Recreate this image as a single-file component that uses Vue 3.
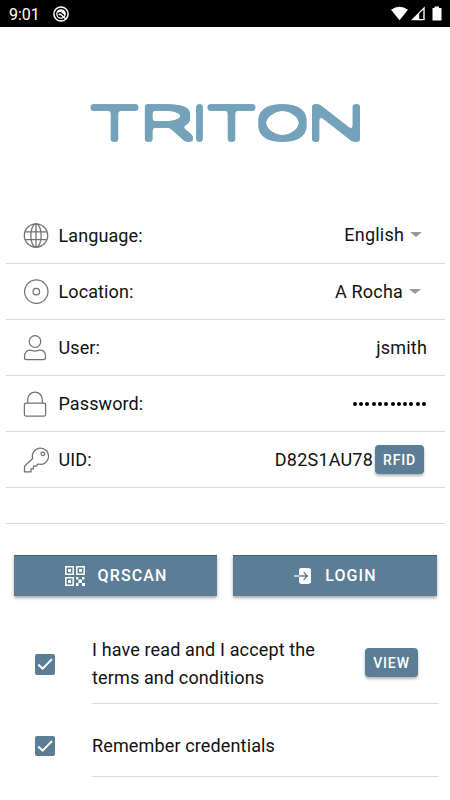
<script setup>
const rows = [
  { key: 'language', label: 'Language:', value: 'English', select: true },
  { key: 'location', label: 'Location:', value: 'A Rocha', select: true },
  { key: 'user', label: 'User:', value: 'jsmith' },
  { key: 'password', label: 'Password:', dots: 12 },
  { key: 'uid', label: 'UID:', value: 'D82S1AU78', button: 'RFID' },
]
const letters = [
  { c: 'T', x: -2, w: 53 },
  { c: 'R', x: 47, w: 58 },
  { c: 'I', x: 104, w: 11 },
  { c: 'T', x: 115, w: 53 },
  { c: 'O', x: 166, w: 53 },
  { c: 'N', x: 216, w: 60 },
]
</script>

<template>
  <div class="screen">
    <header class="status">
      <span class="time">9:01</span>
      <svg class="app-icon" width="16" height="16" viewBox="0 0 16 16">
        <circle cx="8" cy="8" r="7.1" fill="none" stroke="#fff" stroke-width="1.5" />
        <circle cx="8" cy="8" r="4.2" fill="none" stroke="#fff" stroke-width="1.3" />
        <path d="M5 5A4.3 4.3 0 0 1 12 9.5L8.8 6.8A2.2 2.2 0 0 0 5.3 7Z" fill="#fff" />
        <path d="M5.6 8.6L7.5 8.2L12.6 12.8" fill="none" stroke="#fff" stroke-width="1.5" />
      </svg>
      <div class="signals">
        <svg width="52" height="16" viewBox="0 0 52 16">
          <path d="M0 3.8Q8.5-2.4 17 3.8L8.5 14.2Z" fill="#fff" />
          <path d="M20 14.2L33.7 .5V14.2Z" fill="#fff" />
          <path d="M28.2 7.5V13H32.3V3.8Z" fill="#000" />
          <path d="M41.5 2H43.5V.5H48V2H50.5V14.5H41.5Z" fill="#fff" />
        </svg>
      </div>
    </header>

    <div class="brand">
      <svg width="272" height="42" viewBox="0 0 272 42" overflow="visible">
        <filter id="rounded" x="-10" y="-10" width="300" height="64" filterUnits="userSpaceOnUse" color-interpolation-filters="sRGB">
          <feMorphology operator="dilate" radius="3" />
          <feGaussianBlur stdDeviation="1.8" />
          <feComponentTransfer result="shape"><feFuncA type="linear" slope="5" intercept="-2.2" /></feComponentTransfer>
          <feFlood flood-color="#74a2bb" />
          <feComposite in2="shape" operator="in" />
        </filter>
        <text y="37" class="wordmark" filter="url(#rounded)"><tspan
          v-for="(l, i) in letters" :key="i" :x="l.x" :textLength="l.w" lengthAdjust="spacingAndGlyphs">{{ l.c }}</tspan></text>
      </svg>
    </div>

    <section class="fields">
      <div v-for="r in rows" :key="r.key" class="row">
        <svg class="row-icon" width="26" height="26" viewBox="0 0 26 26">
          <g v-if="r.key === 'language'">
            <circle cx="13" cy="12.5" r="11.7" />
            <ellipse cx="13" cy="12.5" rx="5.2" ry="11.7" />
            <path d="M13 .8V24.2M2.2 8.8H23.8M2.2 16.5H23.8" />
          </g>
          <g v-else-if="r.key === 'location'">
            <circle cx="13.3" cy="12.6" r="11.7" />
            <circle cx="13.3" cy="12.6" r="3.3" />
          </g>
          <g v-else-if="r.key === 'user'">
            <circle cx="12" cy="6.5" r="5.8" />
            <path d="M7 15.2C9 15.2 9.7 16 12 16S15 15.2 17 15.2C20.8 15.2 22.5 18 22.5 21.5V22.8Q22.5 24.7 20.5 24.7H3.5Q1.5 24.7 1.5 22.8V21.5C1.5 18 3.2 15.2 7 15.2Z" />
          </g>
          <g v-else-if="r.key === 'password'">
            <rect x="1.4" y="12" width="21.2" height="13" rx="1.5" />
            <path d="M4.7 12V8.4A7.3 7.3 0 0 1 19.3 8.4V12" />
          </g>
          <g v-else>
            <path d="M9.7 11.5A8.1 8.1 0 1 1 15.2 17L13 19.2H10.5V21.8H8V24.9H1.5V19.2Z" />
            <circle cx="19.8" cy="6.8" r="1.8" />
          </g>
        </svg>
        <span class="label">{{ r.label }}</span>
        <span v-if="r.dots" class="dots"><i v-for="n in r.dots" :key="n" /></span>
        <span v-else class="value" :class="[r.key, { picker: r.select }]">{{ r.value }}</span>
        <span v-if="r.select" class="caret" :class="r.key" />
        <button v-if="r.button" class="chip rfid">{{ r.button }}</button>
      </div>
      <div class="row spacer" />
    </section>

    <section class="actions">
      <button class="action">
        <svg class="qr" width="20" height="20" viewBox="0 0 20 20" fill="none" stroke="#fff">
          <path stroke-width="1.5" d="M.8.8H8.2V8.2H.8ZM11.8.8H19.2V8.2H11.8ZM.8 11.8H8.2V19.2H.8Z" />
          <path fill="#fff" stroke="none" d="M3 3H6V6H3ZM14 3H17V6H14ZM3 14H6V17H3ZM11 11H13.5V13.5H11ZM17 11H19.5V13.5H17ZM13.5 13.5H17V17H13.5ZM11 17H13.5V20H11ZM17 17H20V20H17Z" />
        </svg>
        <span>QRSCAN</span>
      </button>
      <button class="action">
        <svg class="enter" width="18" height="16" viewBox="0 0 18 16">
          <rect x="5" y="0" width="12" height="16" rx="2.4" fill="#fff" />
          <path d="M0 8H5" stroke="#fff" stroke-width="1.3" />
          <path d="M5 8H13.2M9.7 4.3L13.4 8L9.7 11.7" fill="none" stroke="#5b7d95" stroke-width="1.3" />
        </svg>
        <span>LOGIN</span>
      </button>
    </section>

    <section class="checks">
      <div class="check terms">
        <span class="box"><svg width="20" height="20" viewBox="0 0 20 20"><path d="M3.3 10.5L7.6 14.7L17 5.1" /></svg></span>
        <div class="check-body">
          <p>I have read and I accept the<br />terms and conditions</p>
          <button class="chip view">VIEW</button>
        </div>
      </div>
      <div class="check remember">
        <span class="box"><svg width="20" height="20" viewBox="0 0 20 20"><path d="M3.3 10.5L7.6 14.7L17 5.1" /></svg></span>
        <div class="check-body"><p>Remember credentials</p></div>
      </div>
    </section>
  </div>
</template>

<style>
body { margin: 0; background: #fff; }
</style>

<style scoped>
* { box-sizing: border-box; }
.screen { width: 450px; height: 800px; overflow: hidden; background: #fff; color: #111; font-family: Roboto, sans-serif; font-size: 18px; }
button { font-family: inherit; color: #fff; background: #5b7d95; border: 0; font-weight: 500; padding: 0; }
.status { height: 27px; background: #000; color: #fff; display: flex; align-items: center; padding: 0 7px 0 9px; }
.time { font-size: 16px; width: 44px; line-height: 27px; padding-top: 1px; }
.app-icon { margin-top: 1px; }
.signals { margin-left: auto; height: 16px; display: flex; }
.brand { height: 181px; padding: 75px 0 0 90px; }
.brand svg { display: block; }
.wordmark { font-family: Inter, sans-serif; font-weight: 100; font-size: 43px; fill: #74a2bb; }
.fields { padding: 0 5px 0 6px; }
.row { height: 56.1px; border-bottom: 1px solid #d9d9d9; display: flex; align-items: center; padding: 0 18px 0 17px; }
.row.spacer { height: 35.5px; }
.row-icon { fill: none; stroke: #707070; stroke-width: 1.25; stroke-linejoin: round; flex: none; }
.label { margin-left: 9.5px; flex: 1; letter-spacing: .1px; }
.value { letter-spacing: .2px; }
.value.picker { margin-right: 6px; position: relative; top: -1px; }
.value.location { top: 0; }
.caret { border: 6px solid transparent; border-top-width: 5.5px; border-top-color: #999; border-bottom: 0; margin-right: 5px; margin-top: -3px; }
.caret.location { margin-right: 6px; margin-top: 0; }
.dots { display: flex; gap: 2.3px; margin-right: 1px; }
.dots i { width: 4px; height: 4px; border-radius: 50%; background: #000; }
.chip { height: 29px; border-radius: 4px; font-size: 14px; letter-spacing: .85px; box-shadow: 0 2px 3px rgba(0,0,0,.3); flex: none; }
.rfid { width: 49px; margin: 0 3px 0 2px; }
.actions { display: grid; grid-template-columns: 203px 204px; column-gap: 16px; padding: 31px 13.5px 0; }
.action { height: 41px; border-top: 1px solid #286b83; box-shadow: 0 2px 3px rgba(0,0,0,.34); display: flex; align-items: center; justify-content: center; font-size: 16px; letter-spacing: 1.1px; padding-left: 2px; }
.qr { margin-right: 13px; }
.enter { margin-right: 13px; }
.checks { padding: 27px 11px 0 34.5px; }
.check { display: flex; align-items: center; }
.box { width: 20.5px; height: 20.5px; border-radius: 2px; background: #5b7d95; margin-right: 37px; flex: none; }
.box svg { display: block; fill: none; stroke: #fff; stroke-width: 2; }
.check-body { flex: 1; height: 100%; display: flex; align-items: center; border-bottom: 1px solid #d9d9d9; padding-right: 21px; }
.check-body p { flex: 1; margin: 0; line-height: 27.5px; letter-spacing: .14px; }
.terms { height: 81px; }
.terms .check-body p { padding-top: 2px; }
.terms .box { margin-top: 2px; }
.remember { height: 73.5px; }
.remember .box { margin-top: 11px; }
.remember .check-body { padding-top: 11px; }
.view { width: 53px; }
</style>
